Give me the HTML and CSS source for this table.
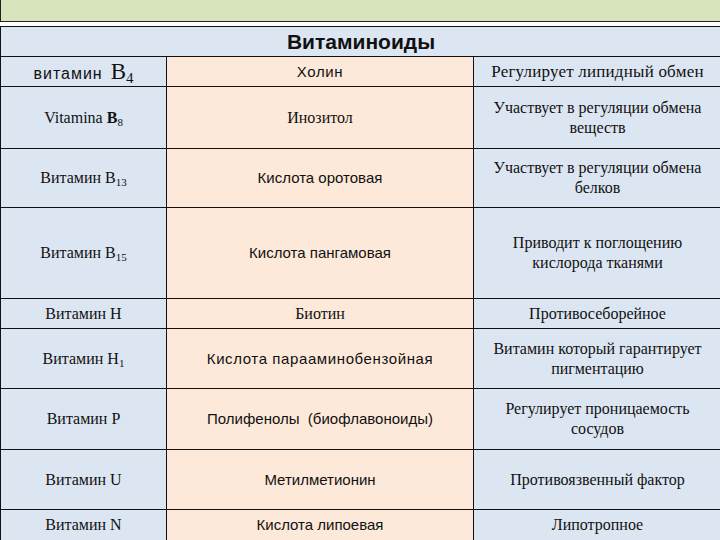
FILE: index.html
```html
<!DOCTYPE html>
<html lang="ru">
<head>
<meta charset="utf-8">
<link rel="stylesheet" href="styles.css">
</head>
<body>
<div class="topbar"></div>
<table class="grid">
  <colgroup><col class="c1"><col class="c2"><col class="c3"></colgroup>
  <tr class="h30"><th colspan="3" class="head">Витаминоиды</th></tr>
  <tr class="h30">
    <td class="blue"><span class="sans wide">витамин</span> <span class="bigb">B<sub>4</sub></span></td>
    <td class="peach sans wide">Холин</td>
    <td class="blue serif spaced">Регулирует липидный обмен</td>
  </tr>
  <tr class="h62">
    <td class="blue serif">Vitamina <b>B</b><sub>8</sub></td>
    <td class="peach serif">Инозитол</td>
    <td class="blue serif">Участвует в регуляции обмена<br>веществ</td>
  </tr>
  <tr class="h59">
    <td class="blue serif">Витамин B<sub>13</sub></td>
    <td class="peach sans">Кислота оротовая</td>
    <td class="blue serif">Участвует в регуляции обмена<br>белков</td>
  </tr>
  <tr class="h91">
    <td class="blue serif">Витамин B<sub>15</sub></td>
    <td class="peach sans">Кислота пангамовая</td>
    <td class="blue serif">Приводит к поглощению<br>кислорода тканями</td>
  </tr>
  <tr class="h30">
    <td class="blue serif">Витамин H</td>
    <td class="peach serif">Биотин</td>
    <td class="blue serif">Противосеборейное</td>
  </tr>
  <tr class="h60">
    <td class="blue serif">Витамин H<sub>1</sub></td>
    <td class="peach sans wide">Кислота парааминобензойная</td>
    <td class="blue serif">Витамин который гарантирует<br>пигментацию</td>
  </tr>
  <tr class="h61">
    <td class="blue serif">Витамин P</td>
    <td class="peach sans">Полифенолы&nbsp; (биофлавоноиды)</td>
    <td class="blue serif">Регулирует проницаемость<br>сосудов</td>
  </tr>
  <tr class="h60">
    <td class="blue serif">Витамин U</td>
    <td class="peach sans">Метилметионин</td>
    <td class="blue serif">Противоязвенный фактор</td>
  </tr>
  <tr class="h31">
    <td class="blue serif">Витамин N</td>
    <td class="peach sans">Кислота липоевая</td>
    <td class="blue serif">Липотропное</td>
  </tr>
</table>
</body>
</html>
```
FILE: styles.css
```css
html, body {
  margin: 0;
  padding: 0;
  background: #ffffff;
  width: 720px;
  height: 540px;
  overflow: hidden;
}
.topbar {
  height: 21px;
  background: #d8e4bc;
  border-left: 1px solid #222;
  border-bottom: 1px solid #222;
  margin-bottom: 4px;
}
.grid {
  border-collapse: collapse;
  width: 721px;
  table-layout: fixed;
}
.c1 { width: 166px; }
.c2 { width: 307px; }
.c3 { width: 248px; }
.grid th, .grid td {
  border: 1px solid #111;
  padding: 0 2px;
  text-align: center;
  vertical-align: middle;
  color: #111;
}
.head {
  background: #dce6f2;
  font-family: "Liberation Sans", Arial, sans-serif;
  font-weight: bold;
  font-size: 21px;
  padding-top: 2px;
}
.blue { background: #dce6f2; }
.peach { background: #fde9d9; }
.serif {
  font-family: "Liberation Serif", "Times New Roman", serif;
  font-size: 16px;
  line-height: 20px;
}
.spaced { font-size: 17px; letter-spacing: 0.2px; }
.sans {
  font-family: "Liberation Sans", Arial, sans-serif;
  font-size: 15px;
  line-height: 20px;
}
.wide { letter-spacing: 0.6px; }
.blue .sans { font-size: 16px; letter-spacing: 1px; }
.bigb {
  font-family: "Liberation Serif", "Times New Roman", serif;
  font-size: 23px;
  margin-left: 4px;
}
.bigb sub { font-size: 15px; vertical-align: -4px; }
sub {
  font-size: 11px;
  vertical-align: -3px;
  line-height: 0;
}
.h30 { height: 30px; }
.h31 { height: 31px; }
.h59 { height: 59px; }
.h60 { height: 60px; }
.h61 { height: 61px; }
.h62 { height: 62px; }
.h91 { height: 91px; }
```
